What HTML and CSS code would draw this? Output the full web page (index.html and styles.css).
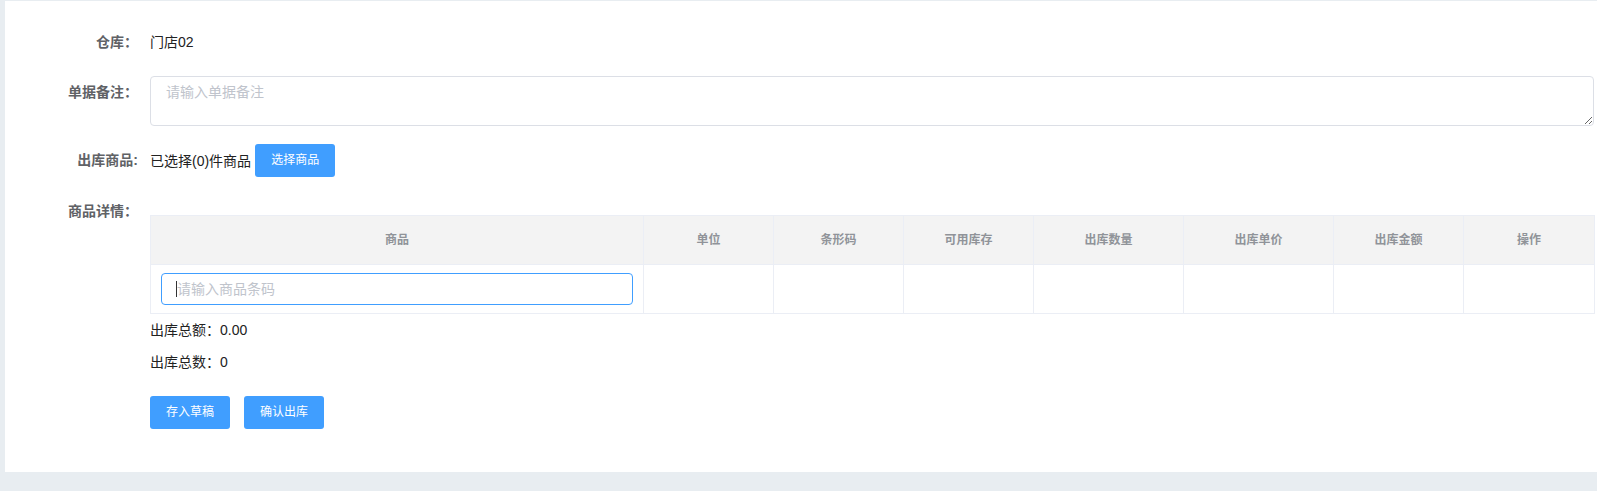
FILE: index.html
```html
<!DOCTYPE html>
<html lang="zh-CN">
<head>
    <meta charset="UTF-8">
    <meta name="viewport" content="width=device-width, initial-scale=1.0">
    <title>出库单</title>
    <link rel="stylesheet" href="styles.css">
</head>
<body>

<div class="page">
    <div class="card">
        <div class="form-row">
            <div class="form-label">仓库：</div>
            <div class="form-content">门店02</div>
        </div>

        <div class="form-row">
            <div class="form-label">单据备注：</div>
            <div class="form-content">
                <textarea class="remark-input" placeholder="请输入单据备注"></textarea>
            </div>
        </div>

        <div class="form-row">
            <div class="form-label">出库商品:</div>
            <div class="form-content picked">
                <span>已选择(0)件商品</span>
                <button class="btn">选择商品</button>
            </div>
        </div>

        <div class="form-row form-row-last">
            <div class="form-label">商品详情：</div>
            <div class="form-content">
                <table class="goods-table">
                    <colgroup>
                        <col style="width: 493px">
                        <col style="width: 130px">
                        <col style="width: 130px">
                        <col style="width: 130px">
                        <col style="width: 150px">
                        <col style="width: 150px">
                        <col style="width: 130px">
                        <col style="width: 131px">
                    </colgroup>
                    <thead>
                        <tr>
                            <th>商品</th>
                            <th>单位</th>
                            <th>条形码</th>
                            <th>可用库存</th>
                            <th>出库数量</th>
                            <th>出库单价</th>
                            <th>出库金额</th>
                            <th>操作</th>
                        </tr>
                    </thead>
                    <tbody>
                        <tr>
                            <td class="cell-input">
                                <div class="input-wrap">
                                    <input class="code-input" type="text" placeholder="请输入商品条码">
                                    <span class="caret"></span>
                                </div>
                            </td>
                            <td></td>
                            <td></td>
                            <td></td>
                            <td></td>
                            <td></td>
                            <td></td>
                            <td></td>
                        </tr>
                    </tbody>
                </table>

                <div class="summary-line">出库总额：0.00</div>
                <div class="summary-line">出库总数：0</div>

                <div class="actions">
                    <button class="btn">存入草稿</button>
                    <button class="btn">确认出库</button>
                </div>
            </div>
        </div>
    </div>
</div>

</body>
</html>
```

FILE: styles.css
```css
body {
    margin: 0;
    padding: 0;
    background-color: #e8edf1;
    font-family: "Liberation Sans", "Noto Sans CJK SC", sans-serif;
    font-size: 14px;
    color: #222;
}
.page {
    padding: 1px 0 0 5px;
}
.card {
    background-color: #fff;
    padding: 25px 3px 43px 0;
}
.form-row {
    display: flex;
    margin-bottom: 18px;
}
.form-row-last {
    margin-bottom: 0;
}
.form-label {
    flex: 0 0 145px;
    box-sizing: border-box;
    padding-right: 12px;
    text-align: right;
    line-height: 32px;
    font-weight: bold;
    color: #606266;
}
.form-content {
    flex: 1;
    min-width: 0;
    line-height: 32px;
}
.picked {
    display: flex;
    align-items: center;
    gap: 4px;
    height: 33px;
}
.remark-input {
    display: block;
    width: 100%;
    height: 50px;
    box-sizing: border-box;
    padding: 5px 15px;
    border: 1px solid #dcdfe6;
    border-radius: 4px;
    font-family: inherit;
    font-size: 14px;
    line-height: 1.5;
    color: #606266;
    resize: vertical;
    outline: none;
}
.remark-input::placeholder,
.code-input::placeholder {
    color: #c0c4cc;
}
.btn {
    display: block;
    height: 33px;
    padding: 0 16px;
    border: none;
    border-radius: 3px;
    background-color: #409eff;
    color: #fff;
    font-family: inherit;
    font-size: 12px;
    line-height: 33px;
    cursor: pointer;
}
.btn:hover {
    background-color: #66b1ff;
}
.goods-table {
    width: 100%;
    margin-top: 20px;
    border-collapse: collapse;
    table-layout: fixed;
}
.goods-table th,
.goods-table td {
    height: 49px;
    padding: 0;
    border: 1px solid #ebeef5;
    box-sizing: border-box;
}
.goods-table th {
    background-color: #f3f3f3;
    color: #909399;
    font-size: 12px;
    font-weight: bold;
    text-align: center;
}
.goods-table .cell-input {
    padding: 0 10px;
}
.input-wrap {
    position: relative;
}
.code-input {
    display: block;
    width: 100%;
    height: 32px;
    box-sizing: border-box;
    padding: 0 15px;
    border: 1px solid #409eff;
    border-radius: 4px;
    font-family: inherit;
    font-size: 14px;
    color: #606266;
    outline: none;
}
.caret {
    position: absolute;
    left: 15px;
    top: 8px;
    width: 1px;
    height: 16px;
    background-color: #333;
}
.summary-line {
    line-height: 32px;
}
.actions {
    display: flex;
    gap: 14px;
    margin-top: 18px;
}
```
